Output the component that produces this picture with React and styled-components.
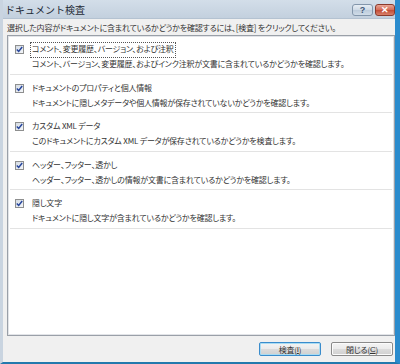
import React from 'react';
import styled, { createGlobalStyle } from 'styled-components';

const GlobalStyle = createGlobalStyle`
  html, body {
    margin: 0;
    padding: 0;
    background: #ffffff;
  }
  body {
    font-family: "Noto Sans CJK JP", "Liberation Sans", sans-serif;
    font-feature-settings: "palt";
  }
`;

const ITEMS = [
  {
    title: 'コメント、変更履歴、バージョン、および注釈',
    desc: 'コメント、バージョン、変更履歴、およびインク注釈が文書に含まれているかどうかを確認します。',
    focused: true,
  },
  {
    title: 'ドキュメントのプロパティと個人情報',
    desc: 'ドキュメントに隠しメタデータや個人情報が保存されていないかどうかを確認します。',
  },
  {
    title: 'カスタム XML データ',
    desc: 'このドキュメントにカスタム XML データが保存されているかどうかを検査します。',
  },
  {
    title: 'ヘッダー、フッター、透かし',
    desc: 'ヘッダー、フッター、透かしの情報が文書に含まれているかどうかを確認します。',
  },
  {
    title: '隠し文字',
    desc: 'ドキュメントに隠し文字が含まれているかどうかを確認します。',
  },
];

const Window = styled.div`
  width: 400px;
  height: 364px;
  box-sizing: border-box;
  display: flex;
  flex-direction: column;
  background: #f0f0f0;
  border-left: 3px solid #c9d4e0;
  border-right: 5px solid #2a8bcd;
  border-bottom: 2px solid #2379ad;
  overflow: hidden;
`;

const TitleBar = styled.div`
  height: 18px;
  flex: none;
  display: flex;
  align-items: center;
  justify-content: space-between;
  padding: 0 0 0 2px;
  margin-left: -3px;
  background: linear-gradient(#d3dee9, #c3d0de);
  border-bottom: 1px solid #b4c2d1;
`;

const TitleText = styled.span`
  font-size: 10px;
  font-feature-settings: normal;
  color: #1e2a36;
  padding-left: 3px;
`;

const TitleButtons = styled.div`
  display: flex;
  gap: 2px;
  align-items: center;
  padding-top: 1px;
`;

const CaptionButton = styled.div`
  width: ${p => p.$w}px;
  height: 12px;
  box-sizing: border-box;
  border-radius: 3px;
  display: flex;
  align-items: center;
  justify-content: center;
  font-family: "Liberation Sans", sans-serif;
  font-size: 9px;
  font-weight: bold;
  border: 1px solid ${p => (p.$close ? '#8a3a2c' : '#8396ab')};
  color: ${p => (p.$close ? '#ffffff' : '#3f5877')};
  background: ${p =>
    p.$close
      ? 'linear-gradient(#e8a595, #d46a55 50%, #c24a34 51%, #d8806a)'
      : 'linear-gradient(#e6edf4, #cfdae6 50%, #bccbdb 51%, #d0dce8)'};
`;

const Body = styled.div`
  flex: 1;
  display: flex;
  flex-direction: column;
  padding: 0 0 0 4px;
  min-height: 0;
  font-size: 8px;
  letter-spacing: -0.2px;
  color: #333333;
`;

const Instruction = styled.div`
  height: 16px;
  display: flex;
  align-items: center;
`;

const Panel = styled.div`
  flex: 1;
  background: #ffffff;
  border: 1px solid #9aa0a8;
  box-shadow: inset 0 0 0 1px #e2e4e8;
  display: flex;
  flex-direction: column;
  padding: 0 2px;
`;

const Row = styled.div`
  height: 38.5px;
  box-sizing: border-box;
  border-bottom: 1px solid #e3e3e3;
  display: grid;
  grid-template-columns: 17px 1fr;
  grid-template-rows: 14px 14px;
  padding: 7px 0 0 5px;
`;

const Check = styled.span`
  width: 9px;
  height: 9px;
  margin-top: 2px;
  box-sizing: border-box;
  border: 1px solid #8e8f8f;
  background: linear-gradient(135deg, #d4dbe3, #f4f6f9);
  display: flex;
  align-items: center;
  justify-content: center;
`;

const ItemTitle = styled.span`
  line-height: 12px;
  justify-self: start;
  outline: ${p => (p.$focused ? '1px dotted #555' : 'none')};
  padding: 0 1px;
  margin-left: -1px;
`;

const ItemDesc = styled.span`
  grid-column: 2;
  line-height: 14px;
  white-space: nowrap;
`;

const Footer = styled.div`
  height: 26px;
  flex: none;
  display: flex;
  justify-content: flex-end;
  align-items: center;
  gap: 10px;
  padding-right: 2px;
`;

const Button = styled.div`
  width: 62px;
  height: 14px;
  box-sizing: border-box;
  border-radius: 2px;
  border: 1px solid ${p => (p.$default ? '#3a8ccc' : '#8a8a8a')};
  box-shadow: ${p => (p.$default ? 'inset 0 0 0 1px #a9dcf3' : 'inset 0 0 0 1px #fbfbfb')};
  background: linear-gradient(#f4f4f4, #ebebeb 50%, #dcdcdc 51%, #d0d0d0);
  display: flex;
  align-items: center;
  justify-content: center;
`;

const Key = styled.span`
  text-decoration: underline;
  font-family: "Liberation Sans", sans-serif;
`;

function CheckMark() {
  return (
    <svg width="7" height="7" viewBox="0 0 7 7">
      <path d="M0.8 3.4 L2.7 5.4 L6.2 1" fill="none" stroke="#27469c" strokeWidth="1.5" />
    </svg>
  );
}

export default function App() {
  return (
    <>
      <GlobalStyle />
      <Window>
        <TitleBar>
          <TitleText>ドキュメント検査</TitleText>
          <TitleButtons>
            <CaptionButton $w={21}>?</CaptionButton>
            <CaptionButton $w={20} $close>✕</CaptionButton>
          </TitleButtons>
        </TitleBar>
        <Body>
          <Instruction>
            選択した内容がドキュメントに含まれているかどうかを確認するには、[検査] をクリックしてください。
          </Instruction>
          <Panel>
            {ITEMS.map((item) => (
              <Row key={item.title}>
                <Check><CheckMark /></Check>
                <ItemTitle $focused={item.focused}>{item.title}</ItemTitle>
                <ItemDesc>{item.desc}</ItemDesc>
              </Row>
            ))}
          </Panel>
          <Footer>
            <Button $default>検査(<Key>I</Key>)</Button>
            <Button>閉じる(<Key>C</Key>)</Button>
          </Footer>
        </Body>
      </Window>
    </>
  );
}
